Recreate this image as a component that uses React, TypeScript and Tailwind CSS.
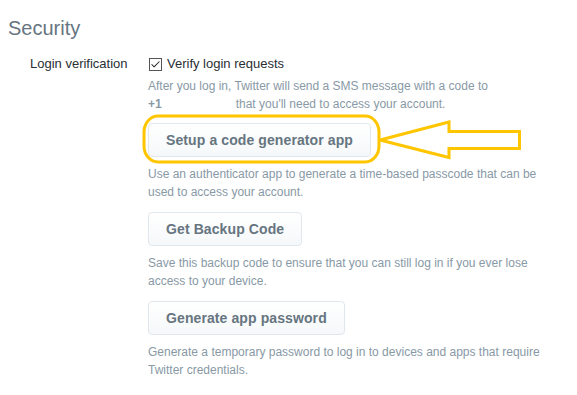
import { Check } from 'lucide-react';

const font = { fontFamily: '"Liberation Sans", Arial, sans-serif' };

const ActionButton = ({ label }: { label: string }) => (
  <button className="h-[34px] px-[17px] rounded-[4px] border border-[#e1e8ed] bg-gradient-to-b from-white to-[#f5f8fa] text-[14px] font-bold text-[#66757f] tracking-[0.1px]">
    {label}
  </button>
);

const Help = ({ children }: { children: React.ReactNode }) => (
  <p className="text-[12px] leading-[18px] text-[#8899a6]">{children}</p>
);

export default function App() {
  return (
    <div className="relative w-[577px] h-[395px] bg-white overflow-hidden" style={font}>
      <h2 className="pl-[8px] pt-[16px] text-[20px] leading-[24px] text-[#66757f]">Security</h2>

      <div className="flex mt-[14px]">
        <div className="w-[148px] pl-[30px] text-[13px] leading-[18px] text-[#292f33] pt-[1px]">
          Login verification
        </div>
        <div className="flex-1">
          <label className="flex items-center gap-[5px] text-[13px] leading-[18px] text-[#292f33] pt-[1px]">
            <span className="ml-[1px] w-[13px] h-[13px] border border-[#555] bg-white flex items-center justify-center">
              <Check className="w-[11px] h-[11px] text-[#222]" strokeWidth={2.2} />
            </span>
            Verify login requests
          </label>

          <div className="mt-[4px]">
            <Help>
              After you log in, Twitter will send a SMS message with a code to
              <br />
              <span className="font-bold">+1</span>
              <span className="inline-block w-[74px]" />
              that you'll need to access your account.
            </Help>
          </div>

          <div className="mt-[10px]">
            <ActionButton label="Setup a code generator app" />
          </div>
          <div className="mt-[8px] pr-[20px]">
            <Help>
              Use an authenticator app to generate a time-based passcode that can be used to access your account.
            </Help>
          </div>

          <div className="mt-[11px]">
            <ActionButton label="Get Backup Code" />
          </div>
          <div className="mt-[8px] pr-[20px]">
            <Help>
              Save this backup code to ensure that you can still log in if you ever lose access to your device.
            </Help>
          </div>

          <div className="mt-[11px]">
            <ActionButton label="Generate app password" />
          </div>
          <div className="mt-[8px] pr-[20px]">
            <Help>
              Generate a temporary password to log in to devices and apps that require Twitter credentials.
            </Help>
          </div>
        </div>
      </div>

      {/* annotation drawn over the page */}
      <svg className="absolute left-0 top-0 pointer-events-none" width="577" height="395" viewBox="0 0 577 395">
        <rect x="144" y="116" width="235" height="46" rx="14" ry="16" fill="none" stroke="#ffc600" strokeWidth="3" />
        <path
          d="M380 140 L449 122 L449 131.5 L519.5 131.5 L519.5 148.5 L449 148.5 L449 157.5 Z"
          fill="none"
          stroke="#ffc600"
          strokeWidth="3"
          strokeLinejoin="miter"
        />
      </svg>
    </div>
  );
}
